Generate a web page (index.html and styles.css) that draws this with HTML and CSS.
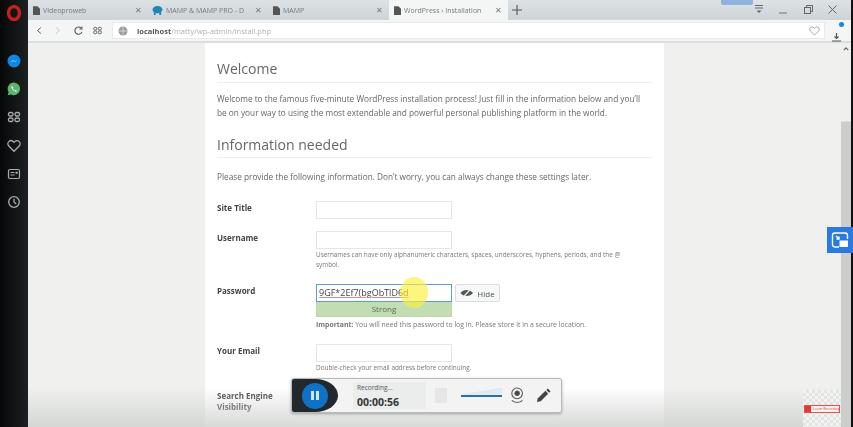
FILE: index.html
```html
<!DOCTYPE html>
<html lang="en">
<head>
<meta charset="utf-8">
<title>WordPress › Installation</title>
<link rel="stylesheet" href="styles.css">
</head>
<body>
<div class="window">
  <aside class="sidebar">
    <svg class="opera" viewBox="0 0 16 18" width="16" height="18"><ellipse cx="8" cy="9" rx="5.500" ry="6.500" fill="none" stroke="#c4211d" stroke-width="3.400"/></svg>
    <div class="side-icons">
      <svg viewBox="0 0 14 14" width="14" height="14"><circle cx="7" cy="7" r="6.500" fill="#0f86e8"/><path d="M3.500 8.500 6 6l1.800 1.400L10.500 5.500 8 8 6.200 6.700z" fill="#dff"/></svg>
      <svg viewBox="0 0 14 14" width="14" height="14"><path d="M7 .5a6.300 6.300 0 0 0-5.400 9.600L.8 13.300l3.300-.8A6.300 6.300 0 1 0 7 .5z" fill="#5bb56f"/><path d="M4.700 3.800c-1 1 0 3 1.300 4.300s3 2.200 4.100 1.200l-1.300-1.400-.9.500c-.8-.3-1.700-1.200-2-2l.5-.9z" fill="#e8f5ea"/></svg>
      <svg viewBox="0 0 14 14" width="14" height="14" fill="none" stroke="#a9acac" stroke-width="1.300"><rect x="1.500" y="2.500" width="4.500" height="3.500" rx="1.500"/><rect x="8" y="2.500" width="4.500" height="3.500" rx="1.500"/><rect x="1.500" y="8" width="4.500" height="3.500" rx="1.500"/><rect x="8" y="8" width="4.500" height="3.500" rx="1.500"/></svg>
      <svg viewBox="0 0 14 14" width="14" height="14" fill="none" stroke="#a9acac" stroke-width="1.300"><path d="M7 12.300 1.800 7a3.100 3.100 0 0 1 4.400-4.400l.8.800.8-.8A3.100 3.100 0 0 1 12.200 7z"/></svg>
      <svg viewBox="0 0 14 14" width="14" height="14" fill="none" stroke="#a9acac" stroke-width="1.200"><rect x="1.500" y="2.500" width="11" height="9" rx="1.500"/><path d="M3.500 5.500h4M3.500 8h4"/><rect x="8.500" y="4.800" width="2.200" height="2" fill="#a9acac" stroke="none"/></svg>
      <svg viewBox="0 0 14 14" width="14" height="14" fill="none" stroke="#a9acac" stroke-width="1.300"><circle cx="7" cy="7" r="5.300"/><path d="M7 3.800V7l2.200 2"/></svg>
    </div>
  </aside>
  <div class="browser">
    <header class="tabbar">
      <div class="tab tab-a"><svg class="doc" viewBox="0 0 8 10" width="7" height="9"><path d="M0 0h5l3 3v7H0z" fill="#555"/></svg><span class="tab-title">Videoproweb</span><span class="tab-x">✕</span></div>
      <div class="tab tab-b"><svg class="doc" viewBox="0 0 12 10" width="11" height="9"><ellipse cx="6" cy="4" rx="5.500" ry="4" fill="#1f86b8"/><path d="M2 6h2v4H2zM8 6h2v4H8z" fill="#1f86b8"/></svg><span class="tab-title">MAMP &amp; MAMP PRO - D</span><span class="tab-x">✕</span></div>
      <div class="tab tab-c"><svg class="doc" viewBox="0 0 8 10" width="7" height="9"><path d="M0 0h5l3 3v7H0z" fill="#555"/></svg><span class="tab-title">MAMP</span><span class="tab-x">✕</span></div>
      <div class="tab tab-d"><svg class="doc" viewBox="0 0 8 10" width="7" height="9"><path d="M0 0h5l3 3v7H0z" fill="#555"/></svg><span class="tab-title">WordPress › Installation</span><span class="tab-x">✕</span></div>
      <svg class="plus" viewBox="0 0 10 10" width="10" height="10"><path d="M5 0v10M0 5h10" stroke="#555" stroke-width="1.100"/></svg>
      <div class="win-controls">
        <svg viewBox="0 0 10 9" width="10" height="9" fill="none" stroke="#666" stroke-width="1"><path d="M1 .5h8M1 3h8"/><path d="M2.500 5.500h5L5 8z" fill="#666" stroke="none"/></svg>
        <svg viewBox="0 0 9 9" width="9" height="9"><path d="M0 8h8" stroke="#777" stroke-width="1"/></svg>
        <svg viewBox="0 0 9 9" width="9" height="9" fill="none" stroke="#666" stroke-width="1"><rect x=".5" y="2.500" width="6" height="6"/><path d="M2.500 2.500v-2h6v6h-2"/></svg>
        <svg viewBox="0 0 9 9" width="9" height="9" fill="none" stroke="#666" stroke-width="1"><path d="m.5.500 8 8M8.500.500l-8 8"/></svg>
      </div>
    </header>
    <nav class="toolbar">
      <svg viewBox="0 0 8 10" width="6" height="9" fill="none" stroke="#555" stroke-width="1.300"><path d="M6.500 1 2 5l4.500 4"/></svg>
      <svg class="fwd" viewBox="0 0 8 10" width="6" height="9" fill="none" stroke="#c4c6c6" stroke-width="1.300"><path d="M1.500 1 6 5 1.500 9"/></svg>
      <svg class="reload" viewBox="0 0 10 10" width="9" height="9" fill="none" stroke="#555" stroke-width="1.200"><path d="M8.800 6.500A4 4 0 1 1 8 2.500"/><path d="M8.800.500v2.800H6"/></svg>
      <svg class="speed" viewBox="0 0 10 10" width="9" height="9" fill="none" stroke="#666" stroke-width="1.100"><rect x=".8" y="1.500" width="3.400" height="3" rx="1"/><rect x="5.800" y="1.500" width="3.400" height="3" rx="1"/><rect x=".8" y="5.500" width="3.400" height="3" rx="1"/><rect x="5.800" y="5.500" width="3.400" height="3" rx="1"/></svg>
      <div class="address">
        <svg viewBox="0 0 10 10" width="10" height="10"><circle cx="5" cy="5" r="4.500" fill="#9a9c9c"/><path d="M1 5h8M5 1v8" stroke="#e6e6e6" stroke-width=".7"/></svg>
        <span class="url"><b>localhost</b>/matty/wp-admin/install.php</span>
        <svg class="url-heart" viewBox="0 0 12 11" width="11" height="10" fill="none" stroke="#9b9d9d" stroke-width="1"><path d="M6 10 1.500 5.500a2.600 2.600 0 0 1 3.700-3.700L6 2.500l.8-.7a2.600 2.600 0 0 1 3.700 3.700z"/></svg>
      </div>
      <div class="download">
        <svg viewBox="0 0 11 11" width="11" height="11" fill="none" stroke="#555" stroke-width="1.200"><path d="M5.500 2v5M3.500 5.500l2 2 2-2M1 10h9"/></svg>
        <span class="dot"></span>
      </div>
    </nav>
    <div class="viewport">
      <main class="page">
        <h1 class="first">Welcome</h1>
        <p class="intro">Welcome to the famous five-minute WordPress installation process! Just fill in the information below and you’ll be on your way to using the most extendable and powerful personal publishing platform in the world.</p>
        <h1 class="second">Information needed</h1>
        <p class="provide">Please provide the following information. Don’t worry, you can always change these settings later.</p>
        <div class="form">
          <label class="lbl">Site Title</label>
          <div class="field"><div class="input"></div></div>
          <label class="lbl">Username</label>
          <div class="field"><div class="input"></div><p class="note">Usernames can have only alphanumeric characters, spaces, underscores, hyphens, periods, and the @ symbol.</p></div>
          <label class="lbl">Password</label>
          <div class="field">
            <div class="pass-row">
              <div class="input pass"><span class="pass-text">9GF*2Ef7(bgObTlD6d</span><span class="cursor-glow"></span></div>
              <div class="hide-btn"><svg viewBox="0 0 14 10" width="14" height="10"><path d="M.5 5C3 1 10 1 13 5 10 9 3 9 .5 5z" fill="#555"/><path d="M3 9.500 11 .500" stroke="#eee" stroke-width="1.200"/></svg>Hide</div>
            </div>
            <div class="strength">Strong</div>
            <p class="note important"><b>Important:</b> You will need this password to log in. Please store it in a secure location.</p>
          </div>
          <label class="lbl">Your Email</label>
          <div class="field"><div class="input"></div><p class="note">Double-check your email address before continuing.</p></div>
          <label class="lbl">Search Engine Visibility</label>
          <div class="field"></div>
        </div>
      </main>
      <div class="scrollbar"><svg viewBox="0 0 8 5" width="6" height="4" fill="none" stroke="#666" stroke-width="1.500"><path d="m1 4 3-3 3 3"/></svg></div>
    </div>
  </div>
  <div class="edge"></div>
</div>
<div class="bottom-shade"></div>
<div class="overlay-tag"></div>
<div class="pip"><svg viewBox="0 0 18 18" width="18" height="18" fill="none" stroke="#fff" stroke-width="1.400"><path d="M8 16H4a2.500 2.500 0 0 1-2.500-2.500v-9A2.500 2.500 0 0 1 4 2h10a2.500 2.500 0 0 1 2.500 2.500V8"/><path d="M5 5l3 3M8 5.500V8H5.500"/><rect x="8.500" y="9.500" width="8.500" height="6.500" fill="#fff" stroke="none"/></svg></div>
<div class="recorder">
  <div class="rec-left"><div class="pause"><span></span><span></span></div></div>
  <div class="rec-time"><div class="rec-label">Recording...</div><div class="rec-clock">00:00:56</div></div>
  <div class="rec-stop"></div>
  <div class="rec-volume"></div>
  <svg class="rec-cam" viewBox="0 0 18 20" width="16" height="18" fill="none" stroke="#555" stroke-width="1.200"><circle cx="8" cy="7" r="6"/><circle cx="8" cy="7" r="2.500" fill="#444"/><path d="M2 15c3 3 9 3 12 0"/></svg>
  <svg class="rec-pen" viewBox="0 0 16 16" width="15" height="15"><path d="M1 15l1-4 8-8 3 3-8 8z" fill="#444"/><path d="M11 2l1.500-1.500 3 3L14 5z" fill="#444"/></svg>
</div>
<div class="watermark"><span class="wm-box"><i></i><span>Loom Recording</span></span></div>
</body>
</html>
```
FILE: styles.css
```css
* { box-sizing: border-box; }
html, body { margin: 0; height: 100%; overflow: hidden; }
body { font-family: "Open Sans", "Liberation Sans", sans-serif; color: #555; background: #f0f1ef; }
.window { display: flex; width: 853px; height: 427px; filter: blur(.35px); }

.sidebar { width: 28px; flex: none; background: linear-gradient(90deg, #060808, #1d2022); display: flex; flex-direction: column; align-items: center; padding-top: 4px; }
.side-icons { display: flex; flex-direction: column; gap: 14.200px; margin-top: 32px; align-items: center; }

.browser { flex: 1; min-width: 0; display: flex; flex-direction: column; }
.tabbar { height: 20px; flex: none; background: linear-gradient(#dde2e5, #cdd3d7); display: flex; align-items: stretch; position: relative; }
.tab { display: flex; align-items: center; font-size: 7px; color: #777a7c; padding-left: 5px; position: relative; white-space: nowrap; overflow: hidden; flex: none; }
.tab-a { width: 120px; }
.tab-b { width: 122px; padding-left: 4px; }
.tab-c { width: 119px; padding-left: 3px; }
.tab-d { width: 119px; background: #f4f6f6; padding-left: 5px; }
.tab-title { margin-left: 3px; flex: 1; overflow: hidden; }
.tab-x { position: absolute; right: 6px; top: 4px; font-size: 8px; color: #777; }
.tab-b .tab-x { right: 8px; }
.tab-b .tab-title { flex: none; width: 82px; }
.plus { align-self: center; margin-left: 4px; }
.win-controls { display: flex; align-items: center; gap: 15.500px; position: absolute; right: 14px; top: 5px; }

.toolbar { height: 23px; flex: none; background: #f4f6f6; border-bottom: 2px solid #dcdedd; display: flex; align-items: center; padding: 0 9px 0 8px; }
.fwd { margin-left: 13px; }
.reload { margin-left: 13px; }
.speed { margin-left: 10px; }
.address { flex: 1; margin-left: 10px; height: 17px; background: #fff; border: 1px solid #e8eaea; display: flex; align-items: center; padding: 0 4px 0 5px; }
.url { font-size: 7.500px; color: #aeb1b1; margin-left: 9px; flex: 1; }
.url b { color: #555; font-weight: 700; }
.download { position: relative; width: 11px; margin-left: 6px; height: 12px; }
.dot { position: absolute; right: -2px; top: -3px; width: 5px; height: 5px; border-radius: 50%; background: #0f86e8; }

.viewport { flex: 1; min-height: 0; position: relative; display: flex; background: #f0f1ef; }
.page { width: 459px; margin-left: 177px; background: #fff; padding: 0 12px; flex: none; height: 384px; overflow: hidden; }
h1 { font-size: 14px; font-weight: 400; color: #666; margin: 0; border-bottom: 1px solid #eee; line-height: 21px; }
.first { padding: 14.500px 0 3.500px; }
.intro { font-size: 8.250px; line-height: 14px; margin: 9px 0 0; color: #666; width: 426px; }
.second { margin-top: 13.500px; padding-bottom: 2.500px; }
.provide { font-size: 8.250px; line-height: 14px; margin: 12px 0 0; color: #666; }
.form { display: grid; grid-template-columns: 99px 1fr; margin-top: 17px; }
.lbl { font-size: 8px; font-weight: 700; color: #444; line-height: 11px; padding: 1px 30px 0 0; }
.field { min-height: 30px; }
.input { width: 136px; height: 18px; background: #fff; border: 1px solid #e4e6e6; }
.note { font-size: 6.400px; line-height: 10px; color: #777; margin: 1px 0 0; width: 308px; }
.pass-row { display: flex; gap: 3px; }
.pass { position: relative; border-color: #5b9dd9; font-size: 9px; color: #444; line-height: 16px; padding-left: 2px; }
.pass-text { text-decoration: underline; text-decoration-color: #d98a8a; }
.cursor-glow { position: absolute; left: 83px; top: -8px; width: 28px; height: 31px; border-radius: 50%; background: rgba(250, 240, 60, .65); }
.hide-btn { width: 45px; height: 18px; background: #f6f7f7; border: 1px solid #ddd; border-radius: 2px; font-size: 8px; display: flex; align-items: center; justify-content: center; gap: 3px; color: #555; }
.strength { width: 136px; height: 16px; margin-top: -1px; background: #c2dcb4; border: 1px solid #bcd6ac; font-size: 8px; text-align: center; line-height: 14px; color: #5a6a55; }
.important { margin-top: 3px; font-size: 6.900px; width: 320px; }
.field:nth-child(4) { margin-bottom: 14px; }
.field:nth-child(6) { margin-bottom: 14px; }
.field:nth-child(8) { margin-bottom: 15px; }
.scrollbar { position: absolute; right: 0; top: 0; bottom: 0; width: 10px; background: linear-gradient(#eef0ee 0, #eef0ee 78px, #cbcecb 79px); display: flex; justify-content: center; padding-top: 4px; align-items: flex-start; }
.edge { width: 2px; background: #111; flex: none; }

.bottom-shade { position: absolute; left: 28px; right: 12px; bottom: 0; height: 40px; background: linear-gradient(rgba(205,208,205,0), rgba(205,208,205,.8)); }
.overlay-tag { position: absolute; left: 721px; top: 0; width: 32px; height: 5px; background: #8fb3dc; border-radius: 0 0 2px 2px; }
.pip { position: absolute; left: 827px; top: 227px; width: 26px; height: 26px; background: #2a7ae2; display: flex; align-items: center; justify-content: center; }

.recorder { position: absolute; left: 291px; top: 378px; width: 271px; height: 35px; background: #f2f3f2; border: 1px solid #b8baba; border-radius: 3px; box-shadow: 0 1px 3px rgba(0,0,0,.3); display: flex; align-items: center; }
.rec-left { width: 46px; height: 33px; background: #22282c; border-radius: 2px 50% 50% 2px / 2px 50% 50% 2px; display: flex; align-items: center; padding-left: 10px; flex: none; }
.pause { width: 26px; height: 26px; border-radius: 50%; background: #0f72c4; display: flex; align-items: center; justify-content: center; gap: 2px; }
.pause span { width: 3px; height: 9px; background: #cfe6fa; }
.rec-time { margin-left: 15px; width: 73px; height: 27px; background: #ebecec; padding-left: 4px; }
.rec-label { font-size: 6.500px; line-height: 10px; padding-top: 1px; color: #555; }
.rec-clock { font-size: 10.500px; font-weight: 700; line-height: 14px; color: #333; margin-top: 2px; }
.rec-stop { width: 12px; height: 15px; background: #e6e6e6; margin-left: 9px; flex: none; }
.rec-volume { width: 41px; height: 2px; background: #2a6ea6; margin-left: 14px; flex: none; position: relative; }
.rec-volume::before { content: ""; position: absolute; left: 0; bottom: 2px; width: 41px; height: 7px; background: #dfe9ef; clip-path: polygon(0 100%, 100% 0, 100% 100%); }
.rec-cam { margin-left: 8px; flex: none; }
.rec-pen { margin-left: 10px; flex: none; }

.watermark { position: absolute; left: 803px; top: 390px; width: 38px; height: 37px; display: flex; align-items: center; justify-content: center; background: repeating-conic-gradient(#e2e4e2 0 25%, #f2f3f2 0 50%) 0 0 / 6px 6px; }
.wm-box { width: 36px; height: 8px; border: 1px solid #e05050; display: flex; align-items: center; gap: 2px; font-size: 3.500px; color: #d44; white-space: nowrap; overflow: hidden; background: #f2f2f2; }
.wm-box i { width: 6px; height: 6px; background: #e33; flex: none; }
```
